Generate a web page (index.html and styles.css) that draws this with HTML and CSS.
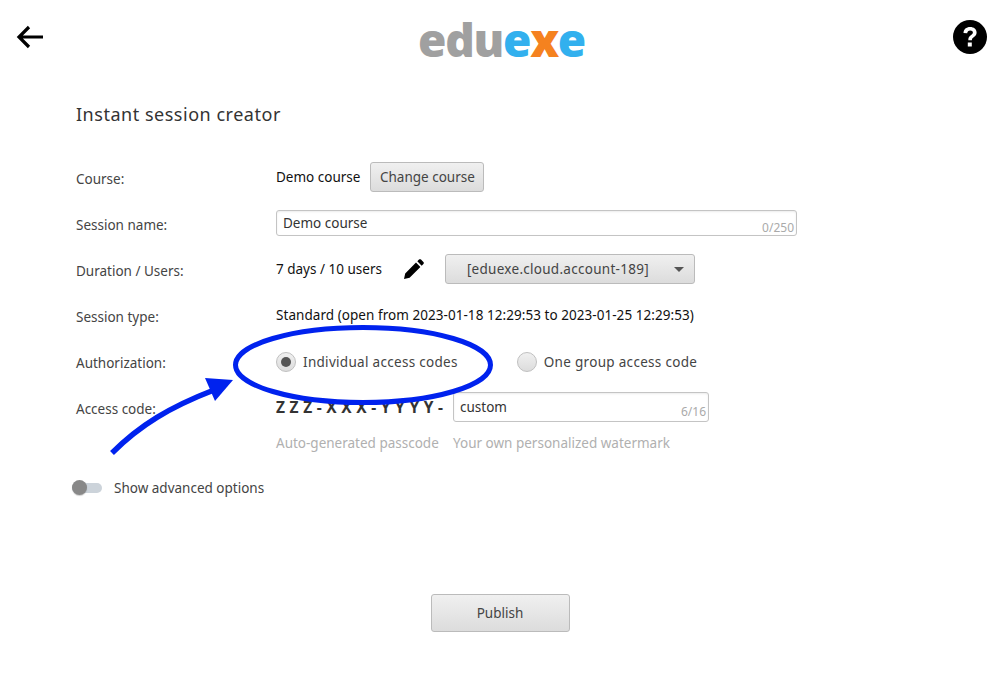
FILE: index.html
```html
<!DOCTYPE html>
<html lang="en">
<head>
    <meta charset="UTF-8">
    <title>Instant session creator</title>
    <link rel="stylesheet" href="styles.css">
</head>
<body>

    <header class="topbar">
        <svg class="back-icon" viewBox="0 0 30 26" width="30" height="26">
            <path d="M28 13H4M14 3L4 13l10 10" fill="none" stroke="#000" stroke-width="3.200"/>
        </svg>
        <div class="logo"><span class="logo-grey">edu</span><span class="logo-blue">e</span><span class="logo-orange">x</span><span class="logo-blue">e</span></div>
        <svg class="help-icon" viewBox="0 0 34 34" width="34" height="34">
            <circle cx="17" cy="17" r="17" fill="#000"/>
            <path d="M10.500 13c0-3.700 2.800-6 6.600-6 3.800 0 6.500 2.200 6.500 5.500 0 2.300-1.100 3.500-2.900 4.700-1.400 1-1.800 1.600-1.800 3.100h-3.600c0-2.700.7-3.900 2.500-5.100 1.500-1 2.100-1.700 2.100-2.600 0-1.300-1.100-2.200-2.700-2.200-1.800 0-2.900 1-3 2.900z" fill="#fff"/>
            <rect x="14.800" y="22.500" width="4" height="4" fill="#fff"/>
        </svg>
    </header>

    <main class="form">
        <h1>Instant session creator</h1>

        <div class="row">
            <div class="label">Course:</div>
            <div class="value">
                <span>Demo course</span>
                <button class="btn btn-course">Change course</button>
            </div>
        </div>

        <div class="row">
            <div class="label">Session name:</div>
            <div class="value">
                <div class="field field-name">Demo course<span class="counter">0/250</span></div>
            </div>
        </div>

        <div class="row">
            <div class="label">Duration / Users:</div>
            <div class="value">
                <span>7 days / 10 users</span>
                <svg class="pencil" viewBox="0 0 20 20" width="20" height="20">
                    <path d="M0 20l1.200-5.600L12 3.600 16.400 8 5.600 18.800z M13.300 2.300L15 .6c.6-.6 1.400-.6 2 0l2.400 2.400c.6.600.6 1.400 0 2L17.700 6.700z" fill="#000"/>
                </svg>
                <button class="btn btn-account">[eduexe.cloud.account-189]<span class="caret"></span></button>
            </div>
        </div>

        <div class="row">
            <div class="label">Session type:</div>
            <div class="value session-type">Standard (open from 2023-01-18 12:29:53 to 2023-01-25 12:29:53)</div>
        </div>

        <div class="row">
            <div class="label">Authorization:</div>
            <div class="value radios">
                <div class="radio-item"><span class="radio radio-on"></span>Individual access codes</div>
                <div class="radio-item"><span class="radio"></span>One group access code</div>
            </div>
        </div>

        <div class="row">
            <div class="label">Access code:</div>
            <div class="value">
                <span class="pattern">ZZZ-XXX-YYYY-</span>
                <div class="field field-code">custom<span class="counter">6/16</span></div>
            </div>
        </div>

        <div class="hints">
            <span class="hint-auto">Auto-generated passcode</span>
            <span>Your own personalized watermark</span>
        </div>

        <div class="advanced">
            <span class="switch"><span class="knob"></span></span>
            Show advanced options
        </div>
    </main>

    <div class="actions">
        <button class="btn btn-publish">Publish</button>
    </div>

    <!-- annotation drawn over the form -->
    <svg class="annotation" viewBox="0 0 1000 680" width="1000" height="680">
        <ellipse cx="363" cy="365" rx="127.500" ry="37.500" fill="none" stroke="#0022ee" stroke-width="5"/>
        <path d="M112 453C140 425 170 407 214 390" fill="none" stroke="#0022ee" stroke-width="5.500"/>
        <path d="M205 378L233 380 215 401z" fill="#0022ee"/>
    </svg>

</body>
</html>
```

FILE: styles.css
```css
* {
    box-sizing: border-box;
}
body {
    margin: 0;
    height: 680px;
    overflow: hidden;
    background: #fff;
    color: #444;
    font-family: "Noto Sans", sans-serif;
    font-size: 13.500px;
    position: relative;
}
.topbar {
    display: flex;
    justify-content: space-between;
    align-items: flex-start;
    height: 80px;
    padding: 24px 13px 0 15px;
}
.back-icon {
    display: block;
}
.help-icon {
    margin-top: -4px;
    display: block;
}
.logo {
    font-family: "Open Sans", sans-serif;
    font-weight: 800;
    font-size: 46px;
    line-height: 40px;
    margin-top: -5px;
    margin-left: 5px;
    letter-spacing: -1.300px;
}
.logo-grey { color: #a0a0a0; }
.logo-blue { color: #32b0ee; }
.logo-orange { color: #f5821f; }

.form {
    padding-left: 76px;
}
h1 {
    margin: 0 0 35px;
    padding-top: 21px;
    font-size: 18px;
    line-height: 26px;
    font-weight: 400;
    letter-spacing: 0.52px;
    color: #333;
}
.row {
    display: flex;
    align-items: center;
    height: 30px;
    margin-bottom: 16px;
}
.label {
    width: 200px;
    padding-top: 3px;
    color: #444;
}
.value {
    display: flex;
    align-items: center;
    color: #111;
}
.session-type {
    letter-spacing: 0.05px;
}
.btn {
    font-family: inherit;
    font-size: 13.500px;
    color: #444;
    border: 1px solid #bbb;
    border-radius: 3px;
    background: linear-gradient(#f0f0f0, #dcdcdc);
    height: 30px;
    padding: 0;
}
.btn-course {
    width: 114px;
    margin-left: 10px;
}
.field {
    position: relative;
    height: 26px;
    border: 1px solid #c4c4c4;
    border-radius: 3px;
    padding: 0 6px;
    line-height: 24px;
    color: #333;
    box-shadow: inset 0 1px 2px rgba(0, 0, 0, 0.08);
}
.field-name {
    width: 521px;
}
.field-code {
    width: 256px;
    height: 30px;
    line-height: 29px;
    margin-left: 9px;
}
.counter {
    position: absolute;
    right: 2px;
    bottom: 0;
    font-size: 12px;
    line-height: 14px;
    color: #aaa;
}
.field-code .counter {
    bottom: 2px;
}
.pencil {
    margin: 0 21px 0 22px;
}
.btn-account {
    width: 250px;
    position: relative;
    padding-right: 24px;
    letter-spacing: 0.28px;
}
.caret {
    position: absolute;
    right: 10px;
    top: 12px;
    border-left: 5px solid transparent;
    border-right: 5px solid transparent;
    border-top: 5px solid #555;
}
.radios {
    gap: 59px;
    margin-top: 2px;
    color: #444;
    letter-spacing: 0.3px;
}
.radio-item {
    display: flex;
    align-items: center;
    gap: 7px;
}
.radio {
    width: 20px;
    height: 20px;
    border: 1px solid #c0c0c0;
    border-radius: 50%;
    background: linear-gradient(#f0f0f0, #dcdcdc);
    position: relative;
}
.radio-on::after {
    content: "";
    position: absolute;
    left: 4px;
    top: 4px;
    width: 10px;
    height: 10px;
    border-radius: 50%;
    background: #555;
}
.pattern {
    font-size: 15.500px;
    font-weight: 700;
    letter-spacing: 4.600px;
    color: #333;
    width: 168px;
    white-space: nowrap;
}
.hints {
    margin: -5px 0 0 200px;
    color: #b0b0b0;
    display: flex;
    line-height: 20px;
}
.hint-auto {
    width: 177px;
}
.advanced {
    display: flex;
    align-items: center;
    margin: 25px 0 0 -4px;
    color: #444;
    line-height: 20px;
}
.switch {
    position: relative;
    width: 30px;
    height: 10px;
    margin-right: 12px;
    border-radius: 5px;
    background: #ccd3da;
}
.knob {
    position: absolute;
    left: 0;
    top: -3px;
    width: 15px;
    height: 15px;
    border-radius: 50%;
    background: #888;
    box-shadow: 0 1px 1px rgba(0, 0, 0, 0.2);
}
.actions {
    display: flex;
    justify-content: center;
    margin-top: 96px;
}
.btn-publish {
    width: 139px;
    height: 38px;
}
.annotation {
    position: absolute;
    left: 0;
    top: 0;
    pointer-events: none;
}
```
